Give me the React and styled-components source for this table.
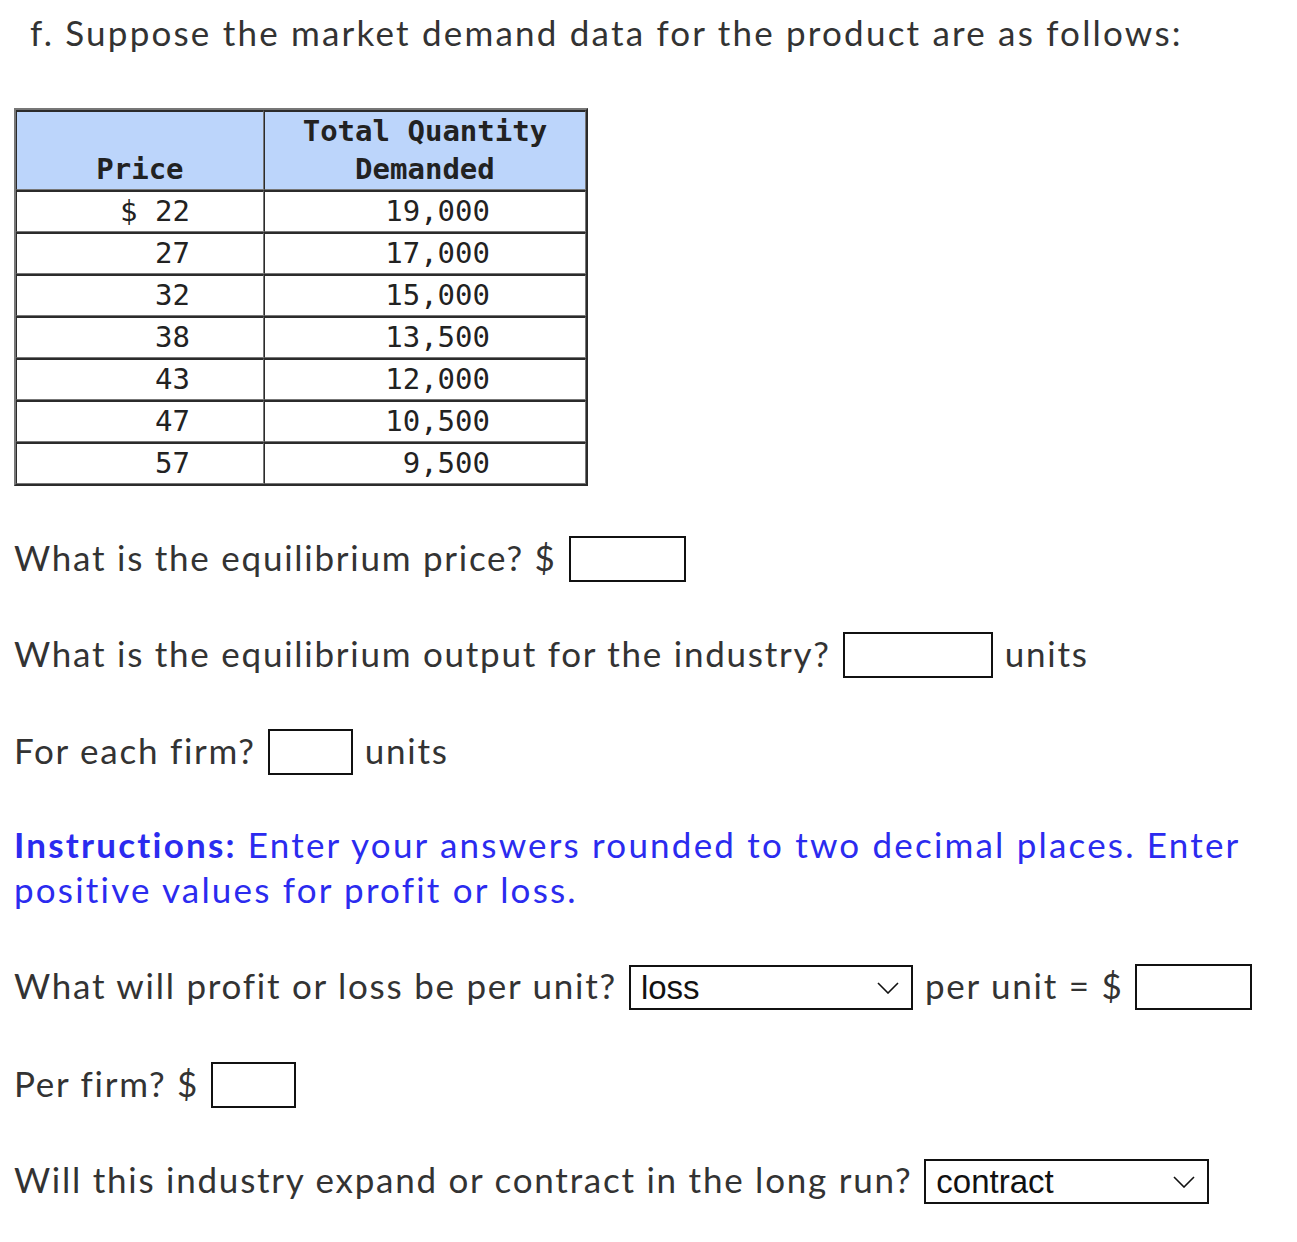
import React from 'react';
import styled, { createGlobalStyle } from 'styled-components';

const GlobalStyle = createGlobalStyle`
  body {
    margin: 0;
    background: #ffffff;
    color: #333333;
    font-family: Lato, "Open Sans", sans-serif;
  }
`;

const Page = styled.main`
  padding: 10px 14px 40px;
  display: flex;
  flex-direction: column;
  font-size: 35px;
  letter-spacing: 1.75px;
`;

const Heading = styled.p`
  margin: 0 0 53px 16px;
  line-height: 45px;
  letter-spacing: 2.2px;
`;

const Table = styled.table`
  width: 574px;
  border-collapse: separate;
  border-spacing: 0;
  border: 2px solid;
  border-color: #777 #2b2b2b #2b2b2b #777;
  font-family: "DejaVu Sans Mono", "Liberation Mono", monospace;
  font-size: 29px;
  letter-spacing: 0;
  color: #222;
  margin-bottom: 50px;
`;

const Th = styled.th`
  width: ${(p) => p.$w}px;
  background: #bcd5fb;
  font-weight: bold;
  text-align: center;
  vertical-align: bottom;
  line-height: 38px;
  height: 76px;
  padding: 0 0 1px;
  border: 1px solid;
  border-top-width: 2px;
  border-color: #2b2b2b #777 #777 #2b2b2b;
`;

const Td = styled.td`
  height: 39px;
  padding: 0 ${(p) => p.$pr}px 0 0;
  text-align: right;
  line-height: 39px;
  border: 1px solid;
  border-top-width: 2px;
  border-color: #2b2b2b #777 #777 #2b2b2b;
`;

const Row = styled.div`
  display: flex;
  align-items: center;
  gap: 12px;
  height: 46px;
  margin-bottom: ${(p) => p.$mb || 50}px;
  white-space: nowrap;
`;

const Label = styled.span`
  padding-bottom: 5px;
`;

const Box = styled.span`
  display: inline-block;
  box-sizing: border-box;
  width: ${(p) => p.$w}px;
  height: 46px;
  border: 2px solid #111;
  background: #fff;
`;

const Select = styled.span`
  display: inline-flex;
  align-items: center;
  justify-content: space-between;
  box-sizing: border-box;
  width: ${(p) => p.$w}px;
  height: 45px;
  padding: 2px 12px 0 10px;
  border: 2px solid #111;
  font-family: "Liberation Sans", Arial, sans-serif;
  font-size: 33px;
  letter-spacing: 0;
  color: #111;
`;

const Instructions = styled.p`
  margin: 0 0 52px;
  line-height: 45px;
  color: #2b2bef;
  width: 1260px;
  letter-spacing: 2.2px;
`;

const Strong = styled.strong`
  font-weight: bold;
`;

const Chevron = () => (
  <svg width="22" height="12" viewBox="0 0 22 12" fill="none">
    <path d="M1 1l10 10L21 1" stroke="#111" strokeWidth="1.6" />
  </svg>
);

const rows = [
  ['$ 22', '19,000'],
  ['27', '17,000'],
  ['32', '15,000'],
  ['38', '13,500'],
  ['43', '12,000'],
  ['47', '10,500'],
  ['57', '9,500'],
];

function App() {
  return (
    <Page>
      <GlobalStyle />
      <Heading>f. Suppose the market demand data for the product are as follows:</Heading>
      <Table>
        <thead>
          <tr>
            <Th $w={248}>Price</Th>
            <Th $w={322}>
              Total Quantity
              <br />
              Demanded
            </Th>
          </tr>
        </thead>
        <tbody>
          {rows.map(([price, qty]) => (
            <tr key={price}>
              <Td $pr={73}>{price}</Td>
              <Td $pr={95}>{qty}</Td>
            </tr>
          ))}
        </tbody>
      </Table>

      <Row>
        <Label>What is the equilibrium price? $</Label>
        <Box $w={117} />
      </Row>
      <Row $mb={51}>
        <Label>What is the equilibrium output for the industry?</Label>
        <Box $w={150} />
        <Label>units</Label>
      </Row>
      <Row $mb={47}>
        <Label>For each firm?</Label>
        <Box $w={85} />
        <Label>units</Label>
      </Row>

      <Instructions>
        <Strong>Instructions:</Strong> Enter your answers rounded to two decimal places. Enter
        positive values for profit or loss.
      </Instructions>

      <Row $mb={52}>
        <Label>What will profit or loss be per unit?</Label>
        <Select $w={284}>
          <span>loss</span>
          <Chevron />
        </Select>
        <Label>per unit = $</Label>
        <Box $w={117} />
      </Row>
      <Row $mb={50}>
        <Label>Per firm? $</Label>
        <Box $w={85} />
      </Row>
      <Row>
        <Label>Will this industry expand or contract in the long run?</Label>
        <Select $w={285}>
          <span>contract</span>
          <Chevron />
        </Select>
      </Row>
    </Page>
  );
}

export default App;
